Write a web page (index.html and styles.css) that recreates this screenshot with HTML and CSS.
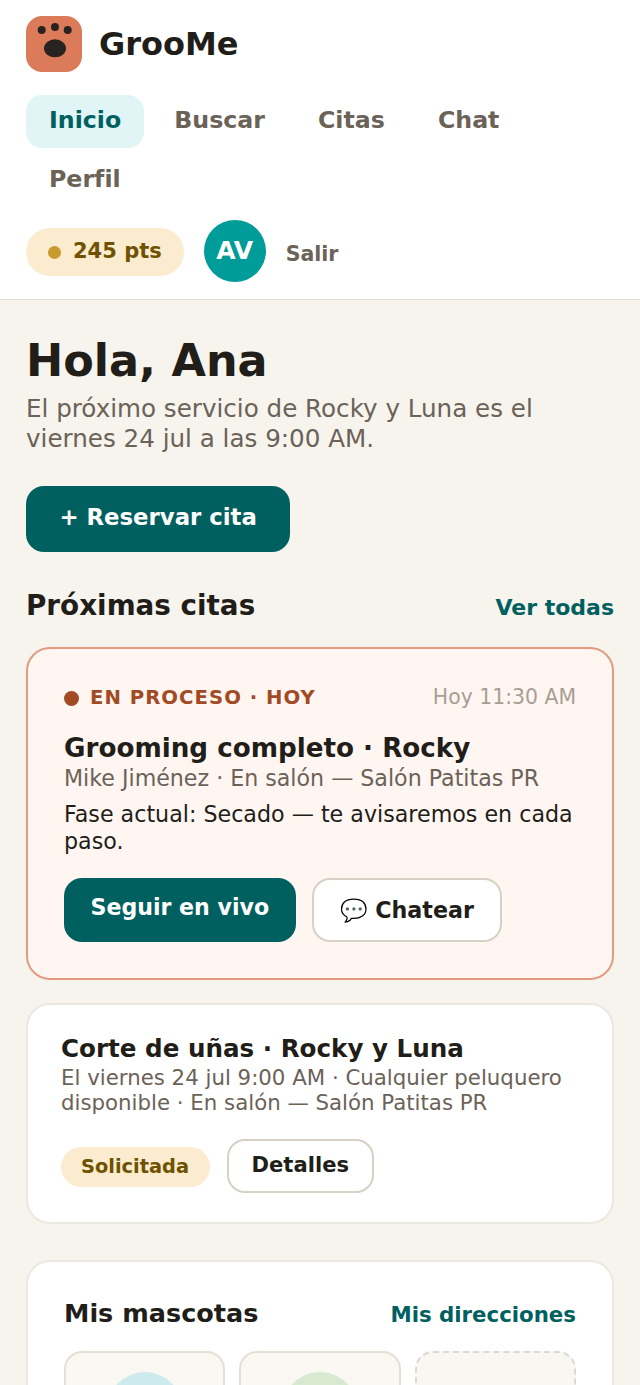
FILE: index.html
```html
<!DOCTYPE html>
<html lang="es">
<head>
  <meta charset="utf-8">
  <title>GrooMe</title>
  <link rel="stylesheet" href="styles.css">
</head>
<body>
  <div class="page">
    <header class="topbar">
      <div class="brand">
        <svg class="brand-logo" viewBox="0 0 56 56" aria-hidden="true">
          <rect width="56" height="56" rx="16" fill="#dc7b5a"/>
          <circle cx="15.700" cy="14" r="4" fill="#262320"/>
          <circle cx="29" cy="11" r="4" fill="#262320"/>
          <circle cx="41.700" cy="14" r="4" fill="#262320"/>
          <ellipse cx="29" cy="32.300" rx="11" ry="9" fill="#262320"/>
        </svg>
        <span class="brand-name">GrooMe</span>
      </div>
      <nav class="nav">
        <a class="nav-link active">Inicio</a>
        <a class="nav-link">Buscar</a>
        <a class="nav-link">Citas</a>
        <a class="nav-link">Chat</a>
        <a class="nav-link">Perfil</a>
      </nav>
      <div class="user-row">
        <span class="points"><i class="points-dot"></i>245 pts</span>
        <span class="avatar">AV</span>
        <a class="logout">Salir</a>
      </div>
    </header>

    <main class="main">
      <h1 class="greeting">Hola, Ana</h1>
      <p class="lead">El próximo servicio de Rocky y Luna es el viernes 24 jul a las 9:00 AM.</p>
      <a class="btn btn-primary btn-book">+ Reservar cita</a>

      <div class="section-head">
        <h2>Próximas citas</h2>
        <a class="link">Ver todas</a>
      </div>

      <section class="card card-live">
        <div class="status-row">
          <span class="status"><i class="status-dot"></i>EN PROCESO · HOY</span>
          <span class="status-time">Hoy 11:30 AM</span>
        </div>
        <h3 class="appt-title">Grooming completo · Rocky</h3>
        <p class="appt-meta">Mike Jiménez · En salón — Salón Patitas PR</p>
        <p class="appt-phase">Fase actual: Secado — te avisaremos en cada paso.</p>
        <div class="actions">
          <a class="btn btn-primary btn-small">Seguir en vivo</a>
          <a class="btn btn-outline btn-chat">💬 Chatear</a>
        </div>
      </section>

      <section class="card card-next">
        <h3 class="appt-title">Corte de uñas · Rocky y Luna</h3>
        <p class="appt-meta">El viernes 24 jul 9:00 AM · Cualquier peluquero disponible · En salón — Salón Patitas PR</p>
        <div class="actions actions-center">
          <span class="badge">Solicitada</span>
          <a class="btn btn-outline btn-details">Detalles</a>
        </div>
      </section>

      <section class="card card-pets">
        <div class="pets-head">
          <h2>Mis mascotas</h2>
          <a class="link link-small">Mis direcciones</a>
        </div>
        <div class="pets">
          <div class="pet"><span class="pet-photo pet-blue"></span></div>
          <div class="pet"><span class="pet-photo pet-green"></span></div>
          <div class="pet pet-add"></div>
        </div>
      </section>
    </main>
  </div>
</body>
</html>
```

FILE: styles.css
```css
* {
  box-sizing: border-box;
}

body {
  margin: 0;
  font-family: "DejaVu Sans", sans-serif;
  color: #211d18;
  background-color: #f7f4ee;
}

h1, h2, h3, p {
  margin: 0;
}

.page {
  height: 100vh;
  overflow: hidden;
}

/* Header */
.topbar {
  background-color: #fff;
  border-bottom: 1px solid #e2dfd6;
  padding: 16px 26px 17px;
}

.brand {
  display: flex;
  align-items: center;
  gap: 17px;
}

.brand-logo {
  width: 56px;
  height: 56px;
}

.brand-name {
  font-size: 32px;
  font-weight: bold;
}

.nav {
  display: flex;
  flex-wrap: wrap;
  gap: 6px 7px;
  margin-top: 23px;
}

.nav-link {
  padding: 11px 23px 13px;
  border-radius: 16px;
  font-size: 23.700px;
  line-height: 29px;
  font-weight: bold;
  color: #6b6258;
}

.nav-link.active {
  background-color: #e2f5f6;
  color: #00605f;
}

.user-row {
  display: flex;
  align-items: center;
  margin-top: 13px;
}

.points {
  display: flex;
  align-items: center;
  gap: 12px;
  height: 48px;
  margin-top: 2px;
  padding: 0 22px 3px;
  border-radius: 24px;
  background-color: #fbeccf;
  color: #6f5200;
  font-size: 21px;
  font-weight: bold;
}

.points-dot {
  width: 13px;
  height: 13px;
  margin-top: 3px;
  border-radius: 50%;
  background-color: #c99a2e;
}

.avatar {
  display: flex;
  align-items: center;
  justify-content: center;
  width: 62px;
  height: 62px;
  margin-left: 20px;
  padding-bottom: 2px;
  border-radius: 50%;
  background-color: #009c99;
  color: #fff;
  font-size: 25px;
  font-weight: bold;
}

.logout {
  margin-top: 6px;
  margin-left: 20px;
  font-size: 20.500px;
  font-weight: bold;
  color: #6b6258;
}

/* Main */
.main {
  padding: 32px 26px;
}

.greeting {
  font-size: 44.500px;
  line-height: 58px;
  font-weight: bold;
}

.lead {
  margin-top: 4px;
  font-size: 24.600px;
  line-height: 30px;
  color: #6b6258;
}

.btn {
  display: inline-block;
  font-weight: bold;
  border-radius: 18px;
}

.btn-primary {
  background-color: #00605f;
  color: #fff;
}

.btn-book {
  margin-top: 32px;
  padding: 16px 33.500px 20px;
  font-size: 22.800px;
  line-height: 30px;
}

.section-head {
  display: flex;
  justify-content: space-between;
  align-items: flex-end;
  margin-top: 37px;
}

.section-head h2 {
  font-size: 27.800px;
  font-weight: bold;
}

.section-head .link {
  margin-bottom: 2px;
}

.link {
  font-size: 22px;
  font-weight: bold;
  color: #00605f;
}

.card {
  background-color: #fff;
  border: 2px solid #ebe8e0;
  border-radius: 24px;
}

.card-live {
  margin-top: 25px;
  padding: 36px;
  background-color: #fff6f2;
  border-color: #e39a80;
}

.status-row {
  display: flex;
  justify-content: space-between;
  align-items: center;
}

.status {
  display: flex;
  align-items: center;
  gap: 11px;
  font-size: 19.700px;
  font-weight: bold;
  letter-spacing: 1px;
  color: #a24a24;
}

.status-dot {
  width: 15px;
  height: 15px;
  margin-top: 2px;
  border-radius: 50%;
  background-color: #a24a24;
}

.status-time {
  font-size: 20.400px;
  color: #a89f94;
}

.appt-title {
  font-size: 24.600px;
  line-height: 32px;
  font-weight: bold;
}

.card-live .appt-title {
  margin-top: 23px;
  font-size: 26.200px;
}

.appt-meta {
  font-size: 21.300px;
  line-height: 25px;
  color: #6b6258;
}

.card-live .appt-meta {
  margin-top: 2px;
  font-size: 22.150px;
}

.appt-phase {
  margin-top: 10px;
  font-size: 22.200px;
  line-height: 27px;
}

.actions {
  display: flex;
  gap: 16px;
  margin-top: 23px;
}

.actions-center {
  align-items: center;
  gap: 17px;
  margin-top: 24px;
}

.btn-small {
  padding: 14px 26.500px 20px;
  font-size: 22.100px;
  line-height: 30px;
}

.btn-outline {
  background-color: #fff;
  border: 2px solid #d6d1c4;
}

.btn-chat {
  padding: 15px 26px;
  font-size: 22.200px;
  line-height: 30px;
}

.card-next {
  margin-top: 23px;
  padding: 28px 33px 29px;
}

.badge {
  margin-top: 2px;
  padding: 8px 21px 8px 20px;
  border-radius: 20px;
  background-color: #fbeccf;
  color: #6f5200;
  font-size: 19.400px;
  line-height: 24px;
  font-weight: bold;
}

.btn-details {
  padding: 11px 22.500px 14px;
  font-size: 21.100px;
  line-height: 25px;
}

.card-pets {
  margin-top: 36px;
  padding: 36px;
}

.pets-head {
  display: flex;
  justify-content: space-between;
  align-items: center;
}

.pets-head h2 {
  margin-bottom: 3px;
  font-size: 25.500px;
  font-weight: bold;
}

.link-small {
  font-size: 21.300px;
}

.pets {
  display: grid;
  grid-template-columns: repeat(3, 1fr);
  gap: 14px;
  margin-top: 20px;
}

.pet {
  height: 150px;
  padding-top: 19px;
  display: flex;
  justify-content: center;
  background-color: #faf8f3;
  border: 2px solid #e4e0d5;
  border-radius: 18px;
}

.pet-add {
  background-color: #f9f7f2;
  border: 2px dashed #dcd9d0;
}

.pet-photo {
  width: 76px;
  height: 76px;
  border-radius: 50%;
}

.pet-blue {
  background-color: #cdeaec;
}

.pet-green {
  background-color: #d8e9d2;
}
```
